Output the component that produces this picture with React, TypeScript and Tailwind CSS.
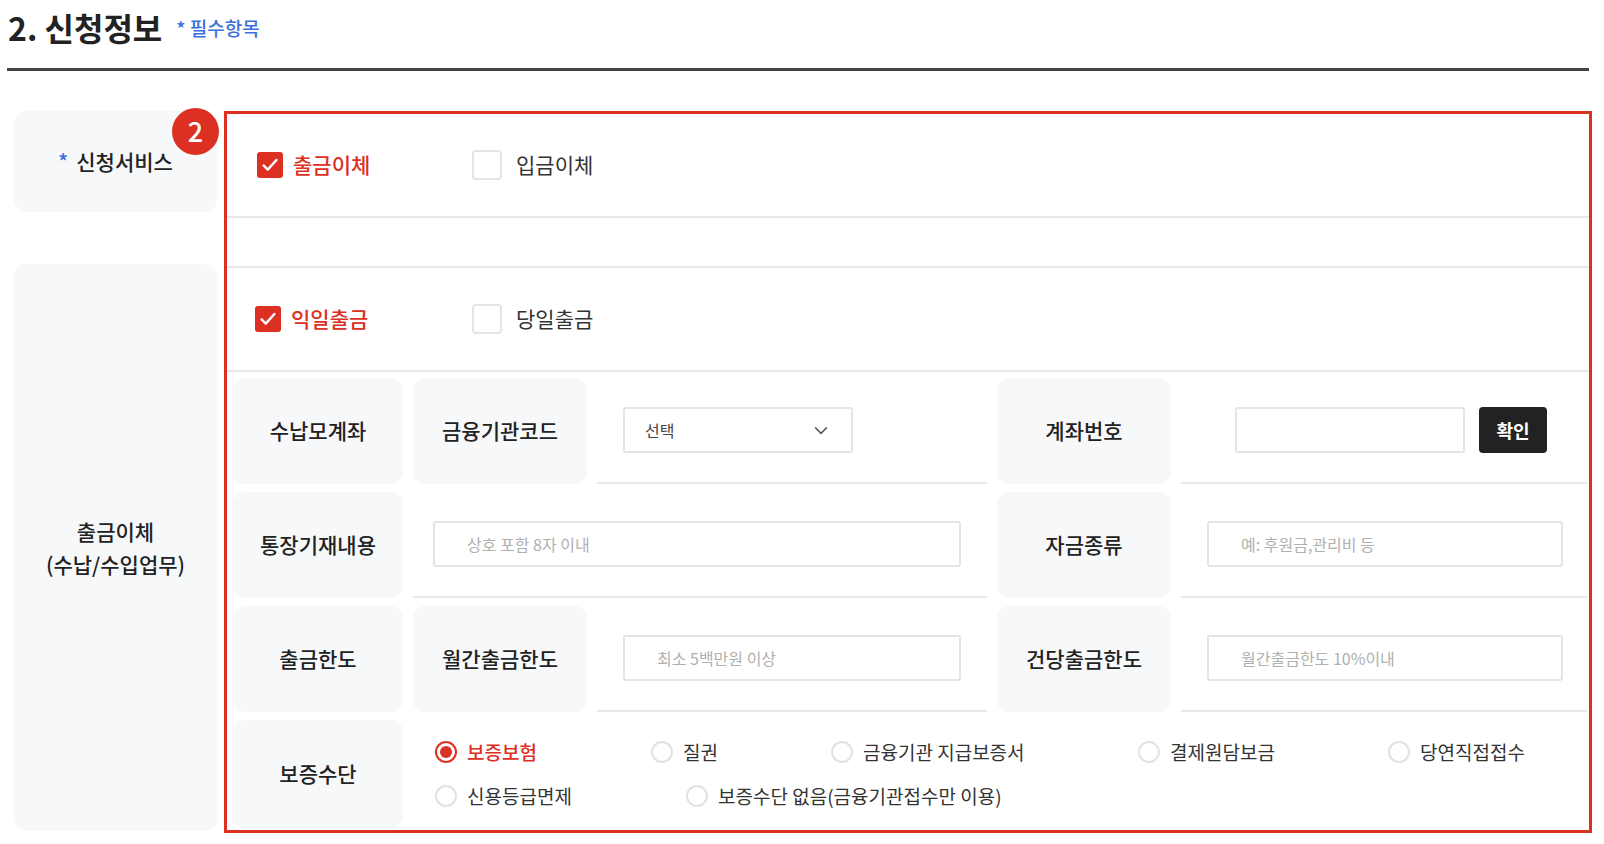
const font = { fontFamily: '"Noto Sans CJK KR", "Noto Sans", sans-serif' };

function Check({ on }: { on?: boolean }) {
	return on ? (
		<span className="flex size-[26px] items-center justify-center rounded-[3px] bg-[#dc3023]">
			<svg viewBox="0 0 24 24" className="size-[22px]" fill="none" stroke="white" strokeWidth="2.6" strokeLinecap="round" strokeLinejoin="round">
				<path d="M5 12.5l4.5 4.5L19 6.5" />
			</svg>
		</span>
	) : (
		<span className="size-[30px] rounded-[4px] border-2 border-[#e4e4e4] bg-white" />
	);
}

function Radio({ on, label }: { on?: boolean; label: string }) {
	return (
		<span className="flex items-center gap-[10px]">
			{on ? (
				<span className="flex size-[22px] items-center justify-center rounded-full border-2 border-[#dc3023]">
					<span className="size-[12px] rounded-full bg-[#dc3023]" />
				</span>
			) : (
				<span className="size-[22px] rounded-full border-2 border-[#e2e2e2]" />
			)}
			<span className={on ? "text-[#dc3023]" : "text-[#333]"}>{label}</span>
		</span>
	);
}

function Lbl({ children, className = "" }: { children: React.ReactNode; className?: string }) {
	return (
		<div className={`flex items-center justify-center rounded-[12px] bg-[#f7f8fa] text-[21px] font-medium text-[#222] ${className}`}>
			{children}
		</div>
	);
}

function Input({ ph, className = "" }: { ph: string; className?: string }) {
	return (
		<div className={`flex h-[46px] items-center rounded-[3px] border-2 border-[#e4e4e4] bg-white px-[32px] text-[16px] text-[#b0b0b0] ${className}`}>
			{ph}
		</div>
	);
}

export default function App() {
	return (
		<div className="min-h-[844px] bg-white" style={font}>
			<div className="flex items-end gap-[14px] px-[8px] pt-[6px] pb-[20px]">
				<h2 className="text-[32px] font-bold text-[#222] leading-[42px]">2. 신청정보</h2>
				<span className="mb-[6px] text-[19px] font-medium text-[#3b6fe0]">* 필수항목</span>
			</div>
			<div className="mx-[7px] w-[1582px] h-[3px] bg-[#444]" />
			<div className="relative mt-[40px] flex gap-[7px] pl-[14px]">
				<div className="flex w-[203px] flex-col gap-[52px]">
					<Lbl className="h-[101px] bg-[#f3f4f7]">
						<span className="mr-[8px] text-[#3b6fe0]">*</span>신청서비스
					</Lbl>
					<Lbl className="h-[567px] bg-[#f3f4f7] flex-col leading-[33px]">
						<span>출금이체</span>
						<span>(수납/수입업무)</span>
					</Lbl>
				</div>
				<span className="absolute left-[172px] top-[-3px] flex size-[47px] items-center justify-center rounded-full bg-[#dc3023] text-[27px] font-medium text-white">2</span>
				<div className="w-[1368px] border-[3px] border-[#dc3023] pb-[2px]">
					<div className="flex h-[104px] items-center border-b-2 border-[#e8e8e8] pl-[30px] text-[21px]">
						<span className="flex w-[215px] items-center gap-[10px] font-medium text-[#dc3023]"><Check on />출금이체</span>
						<span className="flex items-center gap-[14px] text-[#333]"><Check />입금이체</span>
					</div>
					<div className="h-[50px] border-b-2 border-[#e8e8e8]" />
					<div className="flex h-[104px] items-center border-b-2 border-[#e8e8e8] pl-[28px] text-[21px]">
						<span className="flex w-[217px] items-center gap-[10px] font-medium text-[#dc3023]"><Check on />익일출금</span>
						<span className="flex items-center gap-[14px] text-[#333]"><Check />당일출금</span>
					</div>
					<div className="grid grid-cols-[170px_174px_390px_174px_1fr] gap-x-[10px] gap-y-[8px] pl-[6px] pr-[2px] pt-[6px]">
						<Lbl className="h-[106px]">수납모계좌</Lbl>
						<Lbl className="h-[106px]">금융기관코드</Lbl>
						<div className="flex items-center border-b-2 border-[#e8e8e8] pl-[26px]">
							<div className="flex h-[46px] w-[230px] items-center justify-between rounded-[3px] border-2 border-[#e4e4e4] px-[20px] text-[16px] text-[#444]">
								선택
								<svg viewBox="0 0 24 24" className="size-[20px]" fill="none" stroke="#555" strokeWidth="2"><path d="M5 9l7 7 7-7" /></svg>
							</div>
						</div>
						<Lbl className="h-[106px]">계좌번호</Lbl>
						<div className="flex items-center gap-[14px] border-b-2 border-[#e8e8e8] pl-[54px]">
							<div className="h-[46px] w-[230px] rounded-[3px] border-2 border-[#e4e4e4]" />
							<span className="flex h-[46px] w-[68px] items-center justify-center rounded-[4px] bg-[#222] text-[18px] font-bold text-white">확인</span>
						</div>

						<Lbl className="h-[106px]">통장기재내용</Lbl>
						<div className="col-span-2 flex items-center border-b-2 border-[#e8e8e8] pl-[20px] pr-[26px]">
							<Input ph="상호 포함 8자 이내" className="w-full" />
						</div>
						<Lbl className="h-[106px]">자금종류</Lbl>
						<div className="flex items-center border-b-2 border-[#e8e8e8] pl-[26px] pr-[24px]">
							<Input ph="예: 후원금,관리비 등" className="w-full" />
						</div>

						<Lbl className="h-[106px]">출금한도</Lbl>
						<Lbl className="h-[106px]">월간출금한도</Lbl>
						<div className="flex items-center border-b-2 border-[#e8e8e8] pl-[26px] pr-[26px]">
							<Input ph="최소 5백만원 이상" className="w-full" />
						</div>
						<Lbl className="h-[106px]">건당출금한도</Lbl>
						<div className="flex items-center border-b-2 border-[#e8e8e8] pl-[26px] pr-[24px]">
							<Input ph="월간출금한도 10%이내" className="w-full" />
						</div>

						<Lbl className="h-[108px]">보증수단</Lbl>
						<div className="col-span-4 flex flex-col justify-center gap-[16px] pl-[22px] text-[19px]">
							<div className="flex">
								<span className="w-[216px] font-medium"><Radio on label="보증보험" /></span>
								<span className="w-[180px]"><Radio label="질권" /></span>
								<span className="w-[307px]"><Radio label="금융기관 지급보증서" /></span>
								<span className="w-[250px]"><Radio label="결제원담보금" /></span>
								<span><Radio label="당연직접접수" /></span>
							</div>
							<div className="flex">
								<span className="w-[251px]"><Radio label="신용등급면제" /></span>
								<span><Radio label="보증수단 없음(금융기관접수만 이용)" /></span>
							</div>
						</div>
					</div>
				</div>
			</div>
		</div>
	);
}
